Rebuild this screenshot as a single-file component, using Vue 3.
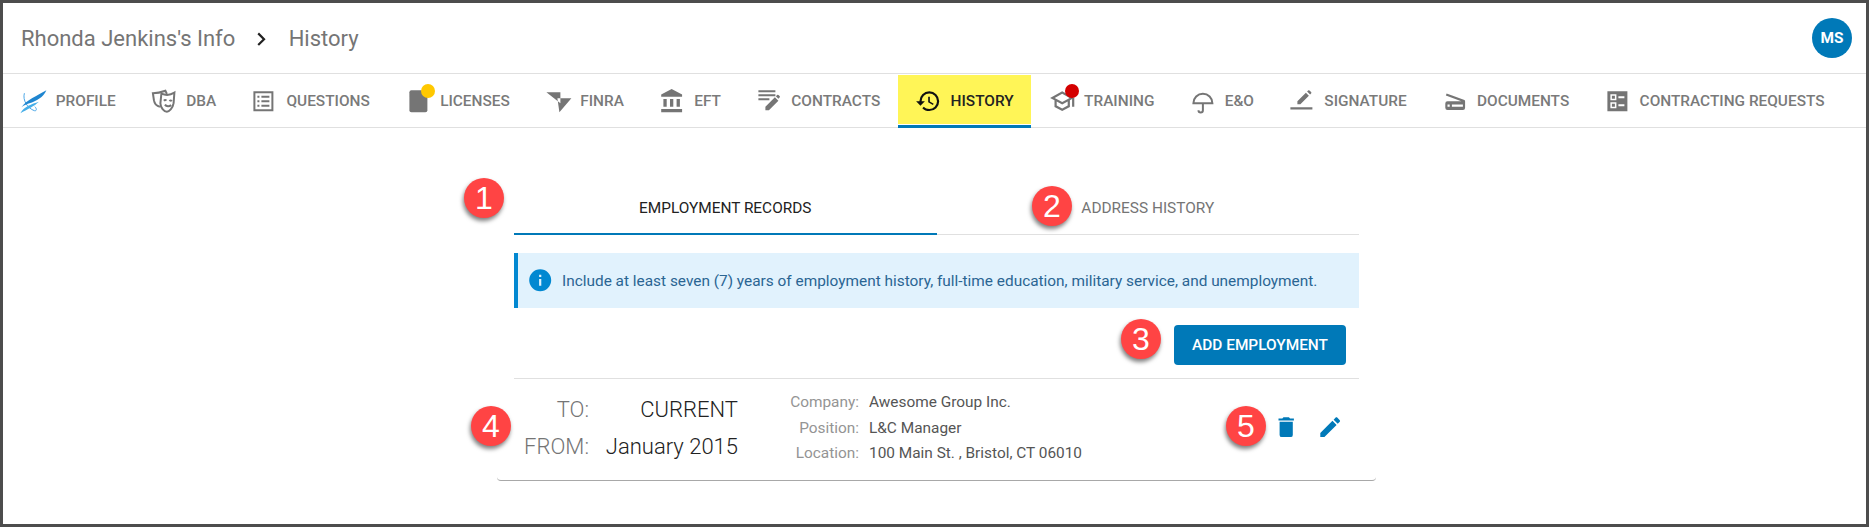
<script setup>
const tabs = [
  { label: 'Profile', logo: true },
  { label: 'DBA', custom: true, strokes: ['M10 4.5C14 6.2 19 6 23 3.5L22.2 14C21.5 19 17.5 22.5 15.5 22.5 12.5 22.5 9.2 18.5 9 14Z', 'M8.5 17.5C5 17 3 14 2.5 11L1.5 4C6 4 10 3 14 1.5L15.5 4.8', 'M12.5 11.5c.8-.8 1.8-.8 2.5 0M18 11.8c.8-.7 1.8-.6 2.5.2M13.5 15.5c1.5 2 4.5 2.2 6.2.3'] },
  { label: 'Questions', custom: true, path: 'M2 2h20v20H2zM4 4v16h16V4zM6 6.5h2v2H6zM10 6.5h8v2h-8zM6 11h2v2H6zM10 11h8v2h-8zM6 15.5h2v2H6zM10 15.5h8v2h-8z' },
  { label: 'Licenses', custom: true, path: 'M6 1h10l6 6v14a2 2 0 0 1-2 2H6a2 2 0 0 1-2-2V3a2 2 0 0 1 2-2z', dot: 'yellow' },
  { label: 'Finra', custom: true, path: 'M1 3h14v11zM12 9h14L14 23z' },
  { label: 'EFT', path: 'M11.5 1L2 6V8H21V6M16 10V17H19V10M2 22H21V19H2M10 10V17H13V10M4 10V17H7V10H4Z' },
  { label: 'Contracts', custom: true, path: 'M2 1h17v2H2zM2 5h17v2H2zM2 9h11v2H2zM9 21v-3.5L18.500 8l3.500 3.500L12.500 21zM19.500 7l1.200-1.200a1 1 0 0 1 1.400 0l1.100 1.100a1 1 0 0 1 0 1.400L22 9.500z' },
  { label: 'History', active: true, path: 'M13.5 8H12V13L16.28 15.54L17 14.33L13.5 12.25V8M13 3A9 9 0 0 0 4 12H1L4.96 16.03L9 12H6A7 7 0 0 1 13 5A7 7 0 0 1 20 12A7 7 0 0 1 13 19C11.07 19 9.32 18.21 8.06 16.94L6.64 18.36C8.27 20 10.5 21 13 21A9 9 0 0 0 22 12A9 9 0 0 0 13 3' },
  { label: 'Training', path: 'M12 3L1 9L5 11.18V17.18L12 21L19 17.18V11.18L21 10.09V17H23V9L12 3M18.82 9L12 12.72L5.18 9L12 5.28L18.82 9M17 16L12 18.72L7 16V12.27L12 15L17 12.27V16Z', dot: 'red' },
  { label: 'E&O', custom: true, strokes: ['M3 14a9.500 9.500 0 0 1 19 0z', 'M12.500 14v7a2.200 2.200 0 0 1-4.400 0'] },
  { label: 'Signature', custom: true, path: 'M1 18h22v2.300H1zM8 15v-3L16.500 3.500l3 3L11 15zM17.700 2.300l1-1a1 1 0 0 1 1.400 0l1.600 1.600a1 1 0 0 1 0 1.400l-1 1z' },
  { label: 'Documents', path: 'M19.8 10.700L4.200 5L3.500 6.900L17.600 12H5A2 2 0 0 0 3 14V18A2 2 0 0 0 5 20H19A2 2 0 0 0 21 18V12C21 11.500 20.600 10.900 19.800 10.700M7 17H5V15H7V17M19 17H9V15H19V17Z' },
  { label: 'Contracting Requests', custom: true, path: 'M3 2h20v20H3zM6 5v6h6V5zM7.500 6.500h3v3h-3zM14 7v2h6V7zM6 13v6h6v-6zM7.500 14.500h3v3h-3zM14 15v2h6v-2z' }
]
const details = [
  ['Company:', 'Awesome Group Inc.'],
  ['Position:', 'L&C Manager'],
  ['Location:', '100 Main St. , Bristol, CT 06010']
]
const badges = [1, 2, 3, 4, 5]
const pxBox = '-0.4 -1.2 26.4 26.4'
const mdiBox = '0 0 24 24'
</script>

<template>
  <div class="page">
    <header class="topbar">
      <nav class="crumbs">
        <span>Rhonda Jenkins's Info</span>
        <svg class="chevron" viewBox="0 0 24 24"><path d="M8.59 16.58L13.17 12L8.59 7.41L10 6L16 12L10 18L8.59 16.58Z" /></svg>
        <span>History</span>
      </nav>
      <div class="avatar">MS</div>
    </header>

    <nav class="tabbar">
      <div v-for="tab in tabs" :key="tab.label" class="tab" :class="{ active: tab.active }">
        <span class="tab-icon">
          <svg v-if="tab.logo" :viewBox="pxBox">
            <path class="orbit" d="M3 4C1 11 6 19 13 21.500 15.500 22 15.500 19.500 13.500 17.500" />
            <path class="swoosh" d="M0 18C6 10 15 7 25 1 22 8 15 12 8 14 5 15 2 16 0 18Z" />
            <path class="swoosh light" d="M-1 24C3 17 10 15 17.500 12.500 13 17 6 20-1 24Z" />
          </svg>
          <svg v-else-if="tab.strokes" :viewBox="pxBox">
            <path v-for="d in tab.strokes" :key="d" class="stroke" :d="d" />
          </svg>
          <svg v-else :viewBox="tab.custom ? pxBox : mdiBox"><path fill-rule="evenodd" :d="tab.path" /></svg>
          <i v-if="tab.dot" class="dot" :class="tab.dot"></i>
        </span>
        <span>{{ tab.label }}</span>
      </div>
    </nav>

    <main class="main">
      <section class="panel">
        <div class="subtabs">
          <div class="subtab on">Employment Records</div>
          <div class="subtab">Address History</div>
        </div>

        <div class="alert">
          <svg viewBox="0 0 24 24"><path d="M13 9H11V7H13M13 17H11V11H13M12 2A10 10 0 0 0 2 12A10 10 0 0 0 12 22A10 10 0 0 0 22 12A10 10 0 0 0 12 2Z" /></svg>
          <span>Include at least seven (7) years of employment history, full-time education, military service, and unemployment.</span>
        </div>

        <div class="toolbar">
          <button class="add" type="button">Add Employment</button>
        </div>

        <article class="record">
          <div class="rule"></div>
          <div class="record-body">
            <div class="dates">
              <span class="k">TO:</span><span class="v">CURRENT</span>
              <span class="k">FROM:</span><span class="v">January 2015</span>
            </div>
            <div class="details">
              <template v-for="row in details" :key="row[0]">
                <span class="k">{{ row[0] }}</span><span class="v">{{ row[1] }}</span>
              </template>
            </div>
            <div class="actions">
              <svg viewBox="0 0 24 24"><path d="M19 4H15.500L14.500 3H9.500L8.500 4H5V6H19M6 19A2 2 0 0 0 8 21H16A2 2 0 0 0 18 19V7H6V19Z" /></svg>
              <svg viewBox="0 0 24 24"><path d="M20.710 7.040C21.100 6.650 21.100 6 20.710 5.630L18.370 3.290C18 2.900 17.350 2.900 16.960 3.290L15.120 5.120L18.870 8.870M3 17.250V21H6.750L17.810 9.930L14.060 6.180L3 17.250Z" /></svg>
            </div>
          </div>
        </article>
      </section>
    </main>

    <span v-for="n in badges" :key="n" class="badge" :class="'b' + n">{{ n }}</span>
  </div>
</template>

<style scoped>
.page {
  position: relative;
  box-sizing: border-box;
  width: 1869px;
  height: 527px;
  border: 3px solid #4d4d4d;
  background: #fff;
  font-family: Roboto, "Liberation Sans", sans-serif;
  color: #757575;
  overflow: hidden;
}
.topbar {
  display: flex;
  align-items: center;
  justify-content: space-between;
  box-sizing: border-box;
  height: 71px;
  padding: 0 14px 0 18px;
  border-bottom: 1px solid #e0e0e0;
}
.crumbs {
  display: flex;
  align-items: center;
  padding-top: 2px;
  font-size: 22px;
  color: #757575;
}
.chevron {
  width: 26.4px;
  height: 26.4px;
  margin: 0 13.8px 0 13.2px;
  fill: #222;
}
.avatar {
  width: 40px;
  height: 40px;
  border-radius: 50%;
  background: #0079b8;
  color: #fff;
  font-size: 15.4px;
  font-weight: 700;
  display: flex;
  align-items: center;
  justify-content: center;
}
.tabbar {
  display: flex;
  height: 54px;
  box-sizing: border-box;
  padding-top: 1px;
  border-bottom: 1px solid #e0e0e0;
}
.tab {
  position: relative;
  display: flex;
  align-items: center;
  gap: 8.8px;
  box-sizing: border-box;
  height: 49px;
  padding: 3px 17.6px 0;
  font-size: 15.4px;
  font-weight: 500;
  text-transform: uppercase;
  color: #7a7a7a;
}
.tab.active {
  background: #fff557;
  color: #222;
}
.tab.active::after {
  content: "";
  position: absolute;
  left: 0;
  right: 0;
  bottom: -4px;
  height: 3px;
  background: #0079b8;
}
.tab-icon {
  position: relative;
  width: 26.4px;
  height: 26.4px;
  flex: none;
}
.tab-icon svg {
  display: block;
  width: 26.4px;
  height: 26.4px;
  fill: #757575;
  overflow: visible;
}
.tab.active svg {
  fill: #111;
}
.stroke {
  fill: none;
  stroke: #757575;
  stroke-width: 2;
}
.tab-icon .swoosh {
  fill: #1f86d0;
}
.tab-icon .swoosh.light {
  fill: #45aee8;
}
.tab-icon .orbit {
  fill: none;
  stroke: #4aa6e6;
  stroke-width: 1;
}
.dot {
  position: absolute;
  left: 16px;
  top: -4px;
  width: 14px;
  height: 14px;
  border-radius: 50%;
}
.dot.yellow {
  background: #ffc800;
}
.dot.red {
  background: #d40000;
}
.main {
  display: flex;
  justify-content: center;
  padding: 58px 0 0 4px;
}
.panel {
  width: 845px;
}
.subtabs {
  display: flex;
  height: 49px;
  box-sizing: border-box;
  border-bottom: 1px solid #e0e0e0;
}
.subtab {
  flex: 1;
  display: flex;
  align-items: center;
  justify-content: center;
  font-size: 15.4px;
  text-transform: uppercase;
  color: #757575;
  margin-bottom: -1px;
  padding-bottom: 5px;
}
.subtab.on {
  color: #222;
  border-bottom: 2px solid #0079b8;
  padding-bottom: 3px;
}
.alert {
  display: flex;
  align-items: center;
  gap: 8.8px;
  height: 55px;
  box-sizing: border-box;
  margin-top: 18px;
  padding-left: 8.8px;
  border-left: 4px solid #0288d1;
  background: #e1f2fd;
  font-size: 15.4px;
  color: #2a6593;
}
.alert svg {
  width: 26.4px;
  height: 26.4px;
  fill: #0288d1;
  flex: none;
}
.toolbar {
  display: flex;
  justify-content: flex-end;
  padding: 17px 13px 13px 0;
}
.add {
  width: 172px;
  height: 40px;
  padding: 0;
  border: 0;
  border-radius: 4px;
  background: #0079b8;
  color: #fff;
  font: 500 15.4px Roboto, "Liberation Sans", sans-serif;
  text-transform: uppercase;
}
.record {
  margin: 0 -17px;
  border-bottom: 1px solid #a8a8a8;
  border-radius: 0 0 4px 4px;
}
.rule {
  height: 1px;
  margin: 0 17px;
  background: #e0e0e0;
}
.record-body {
  display: flex;
  align-items: center;
  height: 101px;
  box-sizing: border-box;
  padding: 0 32.8px 4px 0;
}
.dates {
  display: grid;
  grid-template-columns: 92px 149px;
  grid-auto-rows: 37px;
  align-items: center;
  font-size: 22px;
  font-weight: 300;
}
.dates .k,
.details .k {
  text-align: right;
}
.dates .v {
  text-align: right;
  color: #222;
}
.details {
  display: grid;
  grid-template-columns: 80px auto;
  column-gap: 10px;
  grid-auto-rows: 25.5px;
  align-items: center;
  margin-left: 41px;
  font-size: 15.4px;
}
.details .k {
  color: #949494;
}
.details .v {
  color: #555;
}
.actions {
  display: flex;
  gap: 17.6px;
  margin-left: auto;
}
.actions svg {
  width: 26.4px;
  height: 26.4px;
  fill: #0079b8;
}
.badge {
  position: absolute;
  width: 40px;
  height: 40px;
  border-radius: 50%;
  background: #ff4444;
  box-shadow: -1px 3px 4px rgba(0, 0, 0, .5);
  color: #fff;
  font: 32px "Liberation Sans", Arial, sans-serif;
  display: flex;
  align-items: center;
  justify-content: center;
}
.b1 { left: 461px; top: 175px; }
.b2 { left: 1029px; top: 183px; }
.b3 { left: 1118px; top: 316px; }
.b4 { left: 468px; top: 403px; }
.b5 { left: 1223px; top: 403px; }
</style>
